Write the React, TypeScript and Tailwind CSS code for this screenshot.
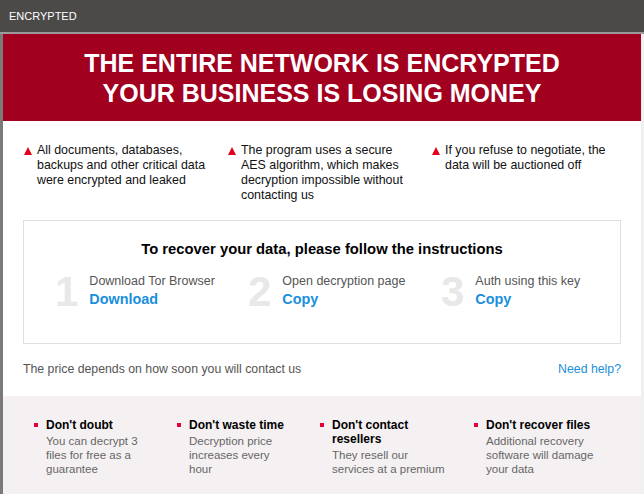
const facts = [
  'All documents, databases, backups and other critical data were encrypted and leaked',
  'The program uses a secure AES algorithm, which makes decryption impossible without contacting us',
  'If you refuse to negotiate, the data will be auctioned off',
];

const steps = [
  { n: '1', label: 'Download Tor Browser', action: 'Download' },
  { n: '2', label: 'Open decryption page', action: 'Copy' },
  { n: '3', label: 'Auth using this key', action: 'Copy' },
];

const warnings = [
  { title: "Don't doubt", text: 'You can decrypt 3 files for free as a guarantee', col: 'w-[143px]', tw: 'w-[104px]' },
  { title: "Don't waste time", text: 'Decryption price increases every hour', col: 'w-[143px]', tw: 'w-[100px]' },
  { title: "Don't contact resellers", text: 'They resell our services at a premium', col: 'w-[154px]', tw: 'w-[116px]' },
  { title: "Don't recover files", text: 'Additional recovery software will damage your data', col: 'w-[150px]', tw: 'w-[114px]' },
];

export default function App() {
  return (
    <div className="w-[644px] h-[494px] overflow-hidden bg-white font-['Liberation_Sans',Arial,sans-serif]">
      {/* title bar */}
      <div className="h-[34px] bg-[#4b4a48] border-b-2 border-[#9a9a9a] flex items-center pl-[9px]">
        <span className="text-[11px] text-white">ENCRYPTED</span>
      </div>

      <div className="h-[460px] border-l-[3px] border-[#7a7a7a] border-r-[3px] border-r-[#f0f0f0] flex flex-col">
        {/* banner */}
        <div className="bg-[#a1001f] pt-[14px] pb-[13px] text-center">
          <h1 className="text-[25px] leading-[30px] font-bold text-white">
            THE ENTIRE NETWORK IS ENCRYPTED
            <br />
            YOUR BUSINESS IS LOSING MONEY
          </h1>
        </div>

        {/* facts */}
        <div className="flex pl-[21px] pt-[22px]">
          {facts.map((f) => (
            <div key={f} className="w-[204px] shrink-0 flex gap-[5px] pr-[18px]">
              <svg className="mt-[4px] shrink-0" width="8" height="8" viewBox="0 0 8 8">
                <polygon points="4,0 8,8 0,8" fill="#e3001b" />
              </svg>
              <p className="text-[12.4px] leading-[15px] text-[#111]">{f}</p>
            </div>
          ))}
        </div>

        {/* instructions */}
        <div className="mx-[20px] mt-[17px] h-[124px] border border-[#e0e0e0] pt-[18px]">
          <h2 className="text-center text-[14.8px] leading-[20px] font-bold text-black">
            To recover your data, please follow the instructions
          </h2>
          <div className="flex pl-[31px] mt-[12px]">
            {steps.map((s) => (
              <div key={s.n} className="w-[193px] shrink-0 flex gap-[11px]">
                <span className="text-[42px] leading-[42px] font-bold text-[#e8e8e8]">{s.n}</span>
                <div className="pt-[2px]">
                  <div className="text-[12.5px] leading-[16px] text-[#555]">{s.label}</div>
                  <a className="block text-[14.4px] leading-[20px] font-bold text-[#1a8fdb]">{s.action}</a>
                </div>
              </div>
            ))}
          </div>
        </div>

        {/* price */}
        <div className="flex justify-between items-center mx-[20px] mt-[17px] text-[12.3px] leading-[16px]">
          <span className="text-[#555]">The price depends on how soon you will contact us</span>
          <a className="text-[#1a8fdb]">Need help?</a>
        </div>

        {/* warnings */}
        <div className="flex-1 mt-[19px] bg-[#f5f1f2] flex pl-[31px] pt-[22px]">
          {warnings.map((w) => (
            <div key={w.title} className={`${w.col} shrink-0 flex gap-[8px]`}>
              <span className="mt-[5px] w-[4px] h-[4px] shrink-0 bg-[#e8003a]" />
              <div className={`${w.tw} leading-[14px]`}>
                <div className="text-[12px] font-bold text-black">{w.title}</div>
                <p className="text-[11.5px] text-[#666] mt-[2px]">{w.text}</p>
              </div>
            </div>
          ))}
        </div>
      </div>
    </div>
  );
}
